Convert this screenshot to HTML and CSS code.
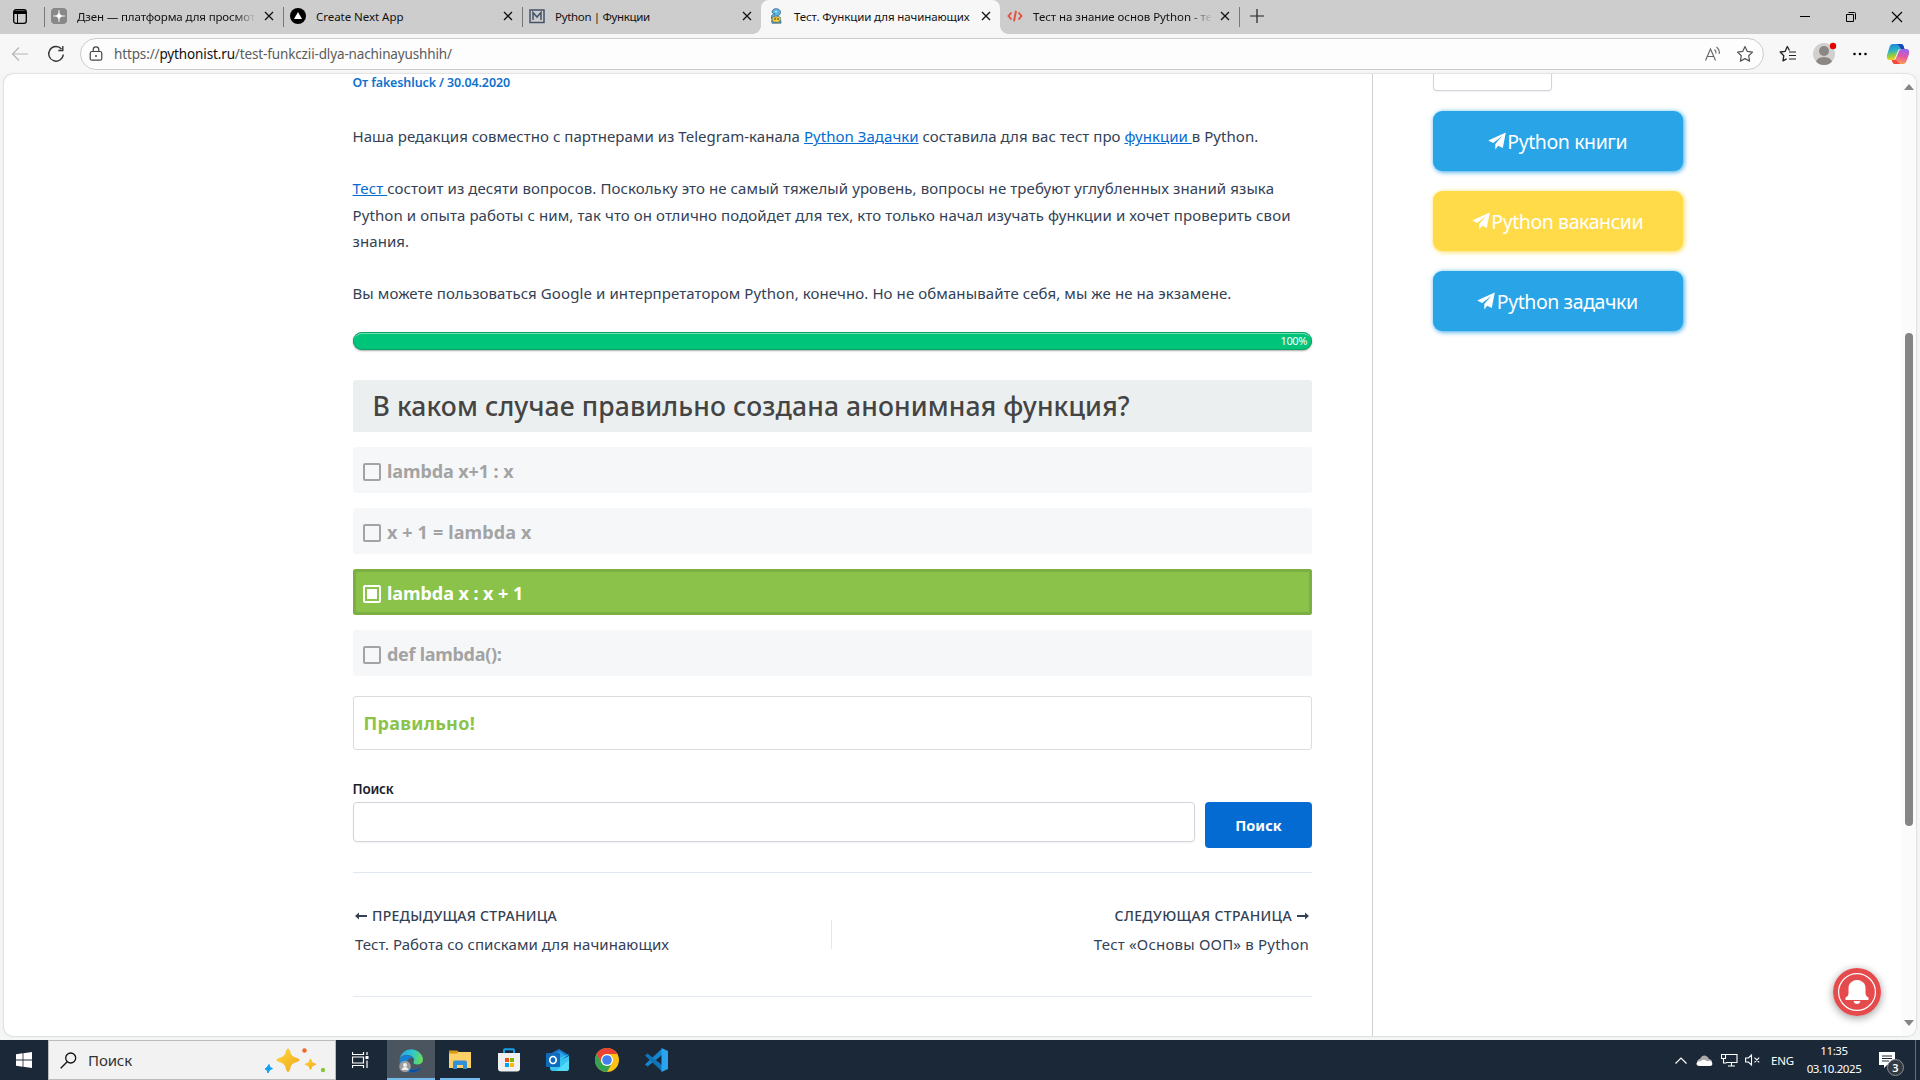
FILE: index.html
```html
<!DOCTYPE html>
<html lang="ru">
<head>
<meta charset="utf-8">
<title>Тест. Функции для начинающих</title>
<link rel="stylesheet" href="styles.css">
</head>
<body>
<svg class="defs" width="0" height="0">
  <symbol id="x" viewBox="0 0 10 10"><path d="M1 1l8 8M9 1l-8 8" fill="none" stroke="#111" stroke-width="1.3"/></symbol>
  <symbol id="plane" viewBox="0 0 18 18"><path fill="#fff" d="M17.800.5L.2 8.600l5 2.300L14.200 4 7.300 12v5.500l2.900-3.700 4.600 2.200z"/></symbol>
</svg>

<header class="tabbar">
  <div class="tab-actions">
    <svg width="14" height="15" viewBox="0 0 14 15"><rect x=".7" y=".7" width="12.600" height="13.600" rx="2.300" fill="none" stroke="#000" stroke-width="1.300"/><path d="M1 1.500h12V5H1z" fill="#000"/><path d="M4.500 4v10" stroke="#000"/></svg>
  </div>
  <div class="tab sep">
    <svg class="fav" width="16" height="16" viewBox="0 0 16 16"><rect width="16" height="16" rx="4" fill="#888"/><path d="M8 2C8.200 6.800 9.200 7.800 14 8 9.200 8.200 8.200 9.200 8 14 7.800 9.200 6.800 8.200 2 8 6.800 7.800 7.800 6.800 8 2z" fill="#fff" stroke="#fff" stroke-width=".5"/></svg>
    <span class="tab-title t1 fade">Дзен — платформа для просмот</span><svg class="close"><use href="#x"/></svg>
  </div>
  <div class="tab sep">
    <svg class="fav" width="16" height="16" viewBox="0 0 16 16"><circle cx="8" cy="8" r="8" fill="#000"/><path d="M8 4l4 7H4z" fill="#fff"/></svg>
    <span class="tab-title t2">Create Next App</span><svg class="close"><use href="#x"/></svg>
  </div>
  <div class="tab sep">
    <svg class="fav" width="16" height="16" viewBox="0 0 16 16"><path d="M1 2h14v12.500H1z" fill="none" stroke="#43536a" stroke-width="1.500"/><path d="M4 12V4.500L8 9l4-4.500V12" fill="none" stroke="#43536a" stroke-width="1.500"/></svg>
    <span class="tab-title t3">Python | Функции</span><svg class="close"><use href="#x"/></svg>
  </div>
  <div class="tab active">
    <svg class="fav" width="16" height="16" viewBox="0 0 16 16"><path d="M4 4.500C4 2 5.500.7 8 .7s4.500 1.200 4.500 3.500S11 8 8.500 8 5 8.500 5 11H3.500V8.500C3.500 7 5 6 7 6z" fill="#59b7ea" stroke="#2b5876" stroke-width=".7"/><path d="M4 9.500l2-1 2 .8 2-1 2.500 1.200-.5 5H4.500z" fill="#f4cf3b" stroke="#54686a" stroke-width=".7"/><path d="M3.500 12.500q5 4 9.500 0v2.800H4z" fill="#55a9d2" stroke="#3d5966" stroke-width=".6"/><circle cx="8" cy="3.500" r="1" fill="#b9e5ff"/><circle cx="7" cy="11" r=".7"/><circle cx="10" cy="11" r=".7"/></svg>
    <span class="tab-title t4">Тест. Функции для начинающих</span><svg class="close"><use href="#x"/></svg>
  </div>
  <div class="tab">
    <svg class="fav" width="16" height="16" viewBox="0 0 16 16"><path d="M4.500 4.500L1.500 8l3 3.500M11.500 4.500l3 3.500-3 3.500M9 2.800L7 13.200" fill="none" stroke="#e2503f" stroke-width="1.900"/></svg>
    <span class="tab-title t5 fade">Тест на знание основ Python - те</span><svg class="close"><use href="#x"/></svg>
  </div>
  <div class="new-tab sep"><svg width="16" height="16" viewBox="0 0 16 16"><path d="M8 1v14M1 8h14" stroke="#222" stroke-width="1.200"/></svg></div>
  <div class="win">
    <svg width="46" height="34" viewBox="0 0 46 34"><path d="M18 16.500h10" stroke="#000"/></svg>
    <svg width="46" height="34" viewBox="0 0 46 34"><path d="M18.500 14.500h7v7h-7zM20.500 12.500h6q1 0 1 1v6" fill="none" stroke="#000"/></svg>
    <svg width="46" height="34" viewBox="0 0 46 34"><path d="M18 12l10 10M28 12L18 22" stroke="#000" stroke-width="1.100"/></svg>
  </div>
</header>

<nav class="toolbar">
  <svg class="back" width="18" height="16" viewBox="0 0 18 16"><path d="M17 8H1.500M8 1.500L1.500 8 8 14.500" fill="none" stroke="#b5b5b5" stroke-width="1.200"/></svg>
  <svg class="reload" width="18" height="18" viewBox="0 0 18 18"><path d="M16.300 9.500A7.300 7.300 0 1 1 14.500 4M15.800 1v4.500h-4.500" fill="none" stroke="#333" stroke-width="1.400"/></svg>
  <div class="address">
    <svg class="lock" width="14" height="16" viewBox="0 0 14 16"><rect x="1.200" y="5.500" width="11.600" height="8.700" rx="1.800" fill="none" stroke="#444" stroke-width="1.200"/><path d="M4.200 5.500V3.700a2.800 2.800 0 0 1 5.600 0v1.800" fill="none" stroke="#444" stroke-width="1.200"/><circle cx="7" cy="10" r="1" fill="#444"/></svg>
    <span class="url">https://<b>pythonist.ru</b>/test-funkczii-dlya-nachinayushhih/</span>
    <svg class="aloud" width="17" height="16" viewBox="0 0 17 16"><path d="M1.500 14.500L6.500 3l5 11.500M3.300 10.500h6.400M10.500 3.500q2 1.800 1.500 4M12.500 1q3.500 3 2.700 7" fill="none" stroke="#666" stroke-width="1.100"/></svg>
    <svg width="18" height="18" viewBox="0 0 18 18"><path d="M9 1.500l2.300 4.900 5.200.7-3.800 3.700.9 5.300L9 13.600l-4.600 2.500.9-5.300L1.500 7.100l5.200-.7z" fill="none" stroke="#555" stroke-width="1.200" stroke-linejoin="round"/></svg>
  </div>
  <svg class="favs" width="18" height="18" viewBox="0 0 18 18"><path d="M10.500 5.500L8.300 1.500 6.200 6.300l-5 .7 3.600 3.700-.8 5.200 3.600-2" fill="none" stroke="#222" stroke-width="1.300" stroke-linejoin="round"/><path d="M10 7h7M10 10.500h7M10 14h7" stroke="#222" stroke-width="1.200"/></svg>
  <svg class="avatar" width="26" height="26" viewBox="0 0 26 26"><defs><clipPath id="av"><circle cx="12" cy="14" r="11"/></clipPath></defs><circle cx="12" cy="14" r="11" fill="#d2d0ce"/><g clip-path="url(#av)" fill="#8a8785"><circle cx="12" cy="11" r="5"/><ellipse cx="12" cy="22.500" rx="8" ry="5.500"/></g><circle cx="21" cy="6" r="3.200" fill="#e60000"/></svg>
  <svg class="dots" width="16" height="4" viewBox="0 0 16 4"><circle cx="2.500" cy="2" r="1.300"/><circle cx="8" cy="2" r="1.300"/><circle cx="13.500" cy="2" r="1.300"/></svg>
  <svg class="copilot" width="24" height="22" viewBox="0 0 24 22"><defs><linearGradient id="c1" x1="0" y1="0" x2=".2" y2="1"><stop offset="0" stop-color="#1b7fe0"/><stop offset=".45" stop-color="#2cb2c9"/><stop offset=".75" stop-color="#8fce3f"/><stop offset="1" stop-color="#f5cf1d"/></linearGradient><linearGradient id="c2" x1=".5" y1="0" x2=".3" y2="1"><stop offset="0" stop-color="#9a62ee"/><stop offset=".45" stop-color="#e357a5"/><stop offset="1" stop-color="#ffa34a"/></linearGradient></defs><path d="M10 1h5q2 0 2.500 2l1 3h-4q-2 0-2.600 2L9 15q-.6 2-2.500 2H4q-4 0-3-5L3.500 4Q4.500 1 7 1z" fill="url(#c1)"/><path d="M10 1h5q2 0 2.500 2l1 3h-3.500q-1.500-2.500-2-3.500T10 1z" fill="#1746b8"/><path d="M14 21H9q-2 0-2.500-2l-.8-2H7.500q2 0 2.600-2L13 8q.6-2 2.500-2H20q4 0 3 5l-2.500 7q-1 3-3.500 3z" fill="url(#c2)"/><path d="M14 21H9q-2 0-2.500-2l-.8-2H9.500q1 0 1.500 1z" fill="#f2463f"/></svg>
</nav>

<div class="frame">
  <main class="page">
    <article class="post">
      <div class="meta">От fakeshluck / 30.04.2020</div>
      <p class="intro">Наша редакция совместно с партнерами из Telegram-канала <a>Python Задачки</a> составила для вас тест про <a>функции </a>в Python.</p>
      <p><a>Тест </a>состоит из десяти вопросов. Поскольку это не самый тяжелый уровень, вопросы не требуют углубленных знаний языка<br>Python и опыта работы с ним, так что он отлично подойдет для тех, кто только начал изучать функции и хочет проверить свои<br>знания.</p>
      <p>Вы можете пользоваться Google и интерпретатором Python, конечно. Но не обманывайте себя, мы же не на экзамене.</p>
      <div class="progress">100%</div>
      <h2 class="question">В каком случае правильно создана анонимная функция?</h2>
      <div class="answer a1"><i class="box"></i><span>lambda x+1 : x</span></div>
      <div class="answer a2"><i class="box"></i><span>x + 1 = lambda x</span></div>
      <div class="answer a3 correct"><i class="box"></i><span>lambda x : x + 1</span></div>
      <div class="answer a4"><i class="box"></i><span>def lambda():</span></div>
      <div class="result">Правильно!</div>
      <div class="label">Поиск</div>
      <div class="search"><div class="field"></div><div class="submit">Поиск</div></div>
      <div class="post-nav">
        <div class="prev"><div class="dir"><svg width="13" height="12" viewBox="0 0 13 12"><path d="M0 6l4-3.500V5h8v2H4v2.500z" fill="#334155"/></svg><span>ПРЕДЫДУЩАЯ СТРАНИЦА</span></div><div class="dest">Тест. Работа со списками для начинающих</div></div>
        <div class="divider"></div>
        <div class="next"><div class="dir"><span>СЛЕДУЮЩАЯ СТРАНИЦА</span><svg width="13" height="12" viewBox="0 0 13 12"><path d="M13 6L9 2.500V5H1v2h8v2.500z" fill="#334155"/></svg></div><div class="dest">Тест «Основы ООП» в Python</div></div>
      </div>
    </article>
    <aside class="side">
      <div class="cut-field"></div>
      <div class="tg"><svg width="18" height="18"><use href="#plane"/></svg><span>Python книги</span></div>
      <div class="tg yellow"><svg width="18" height="18"><use href="#plane"/></svg><span>Python вакансии</span></div>
      <div class="tg"><svg width="18" height="18"><use href="#plane"/></svg><span>Python задачки</span></div>
    </aside>
    <div class="scroll">
      <svg width="10" height="6" viewBox="0 0 10 6"><path d="M5 0l5 6H0z" fill="#858585"/></svg>
      <div class="thumb"></div>
      <svg width="10" height="6" viewBox="0 0 10 6"><path d="M5 6l5-6H0z" fill="#858585"/></svg>
    </div>
    <div class="bell"><svg width="48" height="48" viewBox="0 0 48 48"><circle cx="24" cy="24" r="24" fill="#e54b4d"/><circle cx="24" cy="24" r="18.400" fill="none" stroke="#fff" stroke-width="1.200"/><path d="M24 12q3 0 4 1 4.500 2 4.500 7v5q0 3 3 4.500V32h-23v-2.500q3-1.500 3-4.500v-5q0-5 4.500-7 1-1 4-1z" fill="#fff"/><path d="M20.500 33h7q-.8 3-3.500 3t-3.500-3z" fill="#fff"/></svg></div>
  </main>
</div>

<footer class="taskbar">
  <div class="start"><svg width="16" height="16" viewBox="0 0 16 16" fill="#fff"><path d="M0 2.200L6.600 1.300v6.300H0zM7.400 1.200L16 0v7.600H7.400zM0 8.400h6.600v6.300L0 13.800zM7.400 8.400H16V16l-8.600-1.200z"/></svg></div>
  <div class="tb-search">
    <svg width="17" height="17" viewBox="0 0 17 17"><circle cx="10.700" cy="6" r="5" fill="none" stroke="#111" stroke-width="1.300"/><path d="M7.200 9.700L.7 16.200" stroke="#111" stroke-width="1.300"/></svg>
    <span>Поиск</span>
    <svg class="sparkle" width="62" height="26" viewBox="0 0 62 26"><defs><linearGradient id="g" x1="0" y1="0" x2="1" y2="1"><stop offset="0" stop-color="#ffd83a"/><stop offset="1" stop-color="#f2a61c"/></linearGradient></defs><path d="M24 1.500q1.500 0 3 5.500 1 2.200 3 3 5.500 1.500 5.500 3T30 16q-2 1-3 3-1.500 6-3 6t-3-6q-1-2-3-3-5.500-1.500-5.500-3t5.500-3q2-.8 3-3 1.500-5.500 3-5.500z" fill="url(#g)"/><path d="M46.500 11.500q.8 0 1.600 3l1 1.200q3.400.8 3.400 1.600t-3.400 1.600l-1 1.100q-.8 3-1.600 3t-1.600-3l-1-1.100q-3.400-.8-3.400-1.600t3.400-1.600l1-1.200q.8-3 1.600-3z" fill="url(#g)"/><path d="M5 17.500l1 3 2.500 1-2.800 1.300L4 26l-1-3-2-1 2-1.500z" fill="#0da2f0" stroke="#0da2f0" stroke-linejoin="round"/><circle cx="40.500" cy="3.500" r="2.200" fill="#f26522"/><circle cx="59" cy="23" r="2.200" fill="#8bc53f"/></svg>
  </div>
  <div class="tb"><svg width="17" height="16" viewBox="0 0 17 16"><path d="M.5 0v2.500h11V0M.5 16v-2.500h11V16M.5 5h11v6H.5zM15 0v3M15 8.500V16" fill="none" stroke="#fff" stroke-width="1.200"/><path d="M13.500 4h3v3h-3z" fill="#fff"/></svg></div>
  <div class="tb on"><svg width="26" height="26" viewBox="0 0 26 26"><defs><linearGradient id="e" x1="0" y1=".3" x2="1" y2=".5"><stop offset="0" stop-color="#24a6e5"/><stop offset=".5" stop-color="#30c6cf"/><stop offset="1" stop-color="#66dc58"/></linearGradient></defs><path d="M1.500 12A12 12 0 0 1 25 11.500q.5 5.500-5.500 6-4.500 0-4-2.500 1.500-2 0-4Q13.500 8 9 8q-5 0-7.500 4z" fill="url(#e)"/><path d="M1.200 14Q3 8.200 9 8.200q4.500 0 6.500 2.800-4.500-1-6 3-1 6 5 8.500 5 1.500 9-2.500-4 6-11 5.500Q2.500 24.500 1.200 14z" fill="#1580d4"/><path d="M9.500 13q-2.500 5.500 2 8.500 5 3.500 12.500-2-4 6.500-11 6-8-4-3.500-12.500z" fill="#0c4fa0"/><circle cx="7" cy="19.500" r="5.800" fill="#9c9c9c"/><circle cx="7" cy="18" r="2" fill="#eee"/><path d="M3.500 23q1-3 3.500-3t3.500 3z" fill="#eee"/></svg></div>
  <div class="tb open"><svg width="22" height="20" viewBox="0 0 22 20"><path d="M0 2h22v16H0z" fill="#fdd166"/><path d="M0 .5h8l1.500 1-1.500 2H0z" fill="#d99a13"/><path d="M4 19v-6.500q0-2 2-2h10q2 0 2 2V19h-4v-4H8v4z" fill="#338fd8"/></svg></div>
  <div class="tb"><svg width="24" height="24" viewBox="0 0 24 24"><path d="M7 6V2.200q0-1 1-1h8q1 0 1 1V6" fill="none" stroke="#19a0ea" stroke-width="2"/><path d="M1 5h22v15.500q0 3-3 3H4q-3 0-3-3z" fill="#f0f0f0"/><path d="M8 10h4v4H8z" fill="#f25022"/><path d="M13 10h4v4h-4z" fill="#7fba00"/><path d="M8 15h4v4H8z" fill="#00a4ef"/><path d="M13 15h4v4h-4z" fill="#ffb900"/></svg></div>
  <div class="tb"><svg width="24" height="24" viewBox="0 0 24 24"><path d="M4 6l9-5 10 6v7H4z" fill="#1976c5"/><path d="M8 6.500l6-3 7 5-6 5H8z" fill="#2ba4ea"/><path d="M4 13l19-6.500V20q0 3-3 3H7q-3 0-3-3z" fill="#37c5f1"/><path d="M4 17l19-9V6.500L15 12H4z" fill="#174f98"/><path d="M10 23L23 12v8q0 3-3 3z" fill="#52dcf8"/><rect y="5" width="14" height="14" rx="1" fill="#0f6cbd"/><ellipse cx="7" cy="12" rx="3.200" ry="3.500" fill="none" stroke="#fff" stroke-width="1.700"/></svg></div>
  <div class="tb"><svg width="24" height="24" viewBox="0 0 24 24"><circle cx="12" cy="12" r="12" fill="#fbc116"/><path d="M12 24A12 12 0 0 1 1.600 6L6.800 15 12 18l4.500-2z" fill="#34a34f"/><path d="M1.600 6A12 12 0 0 1 22.400 6H12a6 6 0 0 0-5.200 9z" fill="#ea4335"/><circle cx="12" cy="12" r="6" fill="#fff"/><circle cx="12" cy="12" r="4.800" fill="#4080ee"/></svg></div>
  <div class="tb"><svg width="24" height="24" viewBox="0 0 24 24"><path d="M1.500 16.500L17.500 1.500V7L3.500 18z" fill="#1487d0" stroke="#1487d0" stroke-linejoin="round"/><path d="M1.500 7.500L17.500 22.500V17L3.500 6z" fill="#1074b8" stroke="#1074b8" stroke-linejoin="round"/><path d="M17.500 0L24 3v18l-6.500 3z" fill="#29a3f2"/></svg></div>
  <div class="tray">
    <svg width="12" height="7" viewBox="0 0 12 7"><path d="M.5 6.500L6 1l5.500 5.500" fill="none" stroke="#fff" stroke-width="1.200"/></svg>
    <svg width="17" height="11" viewBox="0 0 17 11"><path d="M2 9q-2-2 0-4 .500-1 2-1.200Q6 0 9 .5q3 .5 4 3.500 3 .5 3 3z" fill="#aaa"/><path d="M3 11q-3-.5-2.500-2.500Q1 6 4.500 6.200 7 3.500 10 5.500l1.200.8q3-1.300 4.500.7Q17.500 10 14.500 11z" fill="#fff"/></svg>
    <svg width="17" height="14" viewBox="0 0 17 14"><path d="M5 1.500h11v8H5M10.500 9.500v3M7 13h7M.5 1.500h4v4h-4zM2.500 5.500v4.500h3" fill="none" stroke="#fff" stroke-width="1.100"/></svg>
    <svg width="15" height="12" viewBox="0 0 15 12"><path d="M.6 4h2.800L6.500 1v10L3.400 8H.6zM9.500 3.700l4.700 4.700M14.200 3.700L9.500 8.400" fill="none" stroke="#fff" stroke-width="1.100"/></svg>
    <span class="lang">ENG</span>
    <div class="clock"><span class="time">11:35</span><span class="date">03.10.2025</span></div>
    <div class="notif"><svg width="16" height="16" viewBox="0 0 16 16"><path d="M0 0h16v13H8l-3 3v-3H0z" fill="#fff"/><path d="M3 4h10M3 6.500h10M3 9h7" stroke="#1b2838"/></svg><span class="count">3</span></div>
    <div class="desk"></div>
  </div>
</footer>
</body>
</html>
```
FILE: styles.css
```css
*{box-sizing:border-box}
body{margin:0;width:1920px;height:1080px;overflow:hidden;font-family:"Noto Sans",sans-serif;background:#f7f7f7;display:flex;flex-direction:column;white-space:nowrap}
svg{display:block;flex:none}
.defs{position:absolute}

/* Browser tabs */
.tabbar{height:34px;background:#cdcdcd;display:flex;flex:none}
.tab-actions{width:44px;display:flex;align-items:center;padding-left:13px;padding-bottom:2px}
.tab{width:239px;display:flex;align-items:center;padding:0 10px 2px 7px;position:relative}
.sep::before{content:"";position:absolute;left:0;top:7px;width:1px;height:20px;background:#777}
.tab-title{font-size:11.5px;color:#111;margin-left:10px;width:180px}
.tab .close{width:10px;height:10px;margin-left:7.5px;margin-right:-.5px}
.t1{letter-spacing:-.124px}.t2{letter-spacing:-.04px}.t3{letter-spacing:-.33px}.t4{letter-spacing:-.11px}.t5{letter-spacing:-.05px}
.fade{-webkit-mask-image:linear-gradient(90deg,#000 88%,transparent);mask-image:linear-gradient(90deg,#000 88%,transparent)}
.tab.active{background:#f7f7f7;border-radius:8px 8px 0 0}
.tab.active::before,.tab.active::after{content:"";position:absolute;bottom:0;width:8px;height:8px}
.tab.active::before{left:-8px;background:radial-gradient(circle at 0 0,#cdcdcd 7.5px,#f7f7f7 8px)}
.tab.active::after{right:-8px;background:radial-gradient(circle at 100% 0,#cdcdcd 7.5px,#f7f7f7 8px)}
.new-tab{position:relative;width:36px;display:flex;align-items:center;padding:0 0 2px 10px}
.win{margin-left:auto;display:flex}

/* Toolbar */
.toolbar{height:40px;flex:none;display:flex;align-items:center}
.back{margin-left:11px}
.reload{margin-left:18px}
.address{width:1684px;height:32px;margin-left:15px;border:1px solid #cbcbcb;border-radius:16px;background:#fdfdfd;display:flex;align-items:center;padding:0 9px 0 8px}
.url{font-size:13.5px;letter-spacing:-.135px;color:#5b5b5b;margin-left:11px;margin-right:auto}
.url b{font-weight:400;color:#111}
.aloud{margin-right:15px}
.favs{margin-left:15px}
.avatar{margin:-2px 0 0 15px}
.dots{margin-left:14px}
.copilot{margin-left:18px}

/* Page */
.frame{height:966px;flex:none;padding:0 4px 4px;background:#f4f6f6}
.page{height:962px;background:#fff;border-radius:9px;overflow:hidden;box-shadow:0 0 2px #aaa;display:flex;position:relative}
.post{width:1369px;padding:0 60px 0 349px;border-right:1px solid #cfcfd6;color:#334155;flex:none}
.meta{font-size:12.5px;font-weight:600;letter-spacing:-.115px;line-height:17px;color:#1072cf;margin:0 0 32.4px -.5px}
.post p{margin:0 0 25.6px -.5px;font-size:15px;line-height:26.4px;letter-spacing:.094px}
.post .intro{letter-spacing:.033px}
.post a{color:#046bd2;text-decoration:underline}
.progress{height:18px;margin-top:-.4px;border-radius:9px;background:#00c479;color:#fff;font-size:11px;letter-spacing:-.4px;line-height:18px;text-align:right;padding-right:5px;box-shadow:inset 0 0 0 1px #08a365,inset 0 2px 0 #6fe0b0,0 1px 2px #aaa}
.question{margin:30px 0 0;height:52px;line-height:53px;padding-left:19.5px;background:#ebeff0;border-radius:3px 3px 0 0;font-size:26.5px;font-weight:500;letter-spacing:.13px;color:#444}
.answer{height:46px;margin-top:15px;background:#f6f7f9;border-radius:3px;padding:3px 10px 0;display:flex;align-items:center;font-size:18px;font-weight:700;color:#a3a3a3}
.box{width:18px;height:18px;border:2px solid #a3a3a3;border-radius:2px;margin:1px 6px 0 0}
.a1{letter-spacing:-.09px}.a2{letter-spacing:.14px}.a3{letter-spacing:-.06px}.a4{letter-spacing:-.28px}
.answer.correct{background:#8bc34a;box-shadow:inset 0 0 0 3px #7cae42;color:#fff}
.correct .box{border-color:#fff;background:#fff;background-clip:content-box;padding:2px}
.result{margin-top:20px;height:54px;line-height:52px;border:1px solid #dcdcdc;border-radius:3px;padding-left:9.5px;font-size:18px;font-weight:700;letter-spacing:.284px;color:#8bc34a}
.label{margin:29px 0 3px -.5px;font-size:13.5px;line-height:20px;font-weight:600;letter-spacing:-.2px;color:#1a202c}
.search{display:flex;gap:10px;height:70px;align-items:flex-start;padding-bottom:24px}
.field{flex:1;height:40px;border:1px solid #d1d5db;border-radius:4px;box-shadow:0 1px 2px rgba(0,0,0,.06)}
.submit{width:107px;height:46px;line-height:46px;border-radius:4px;background:#046bd2;color:#fff;text-align:center;font-size:14.5px;font-weight:700}
.post-nav{border-top:1px solid #e2e8f0;border-bottom:1px solid #e2e8f0;height:125px;padding:31px 3px 0 2px;display:grid;grid-template-columns:476px 1px 1fr}
.dir{display:flex;align-items:center;gap:4px;font-size:14px;font-weight:500;line-height:24px}
.prev .dir{letter-spacing:.28px}
.next .dir{letter-spacing:.35px;justify-content:flex-end}
.dest{margin-top:2px;font-size:15px;line-height:28px;letter-spacing:.046px}
.next .dest{letter-spacing:.2px;text-align:right}
.divider{margin-top:16px;height:29px;background:#e2e8f0}

/* Sidebar */
.side{width:310px;padding-left:60px;flex:none}
.cut-field{width:119px;height:17px;margin-bottom:20px;border:1px solid #d1d5db;border-top:0;border-radius:0 0 4px 4px;box-shadow:0 1px 2px rgba(0,0,0,.06)}
.tg{height:60px;margin-bottom:20px;border-radius:9px;background:#28a4e7;box-shadow:1px 1px 5px #28a4e7;color:#fff;font-size:19.5px;letter-spacing:-.42px;display:flex;align-items:center;justify-content:center;gap:1.5px;padding:1px 1px 0 0}
.tg svg{margin-top:-2px}
.tg.yellow{background:#ffdb49;box-shadow:1px 1px 5px #ffdb49}
.scroll{margin-left:auto;width:15px;background:#fbfbfb;display:flex;flex-direction:column;align-items:center;padding:10px 0}
.thumb{width:8px;height:493px;margin:243px 0 auto;border-radius:4px;background:#858585}
.bell{position:absolute;left:1829px;top:894px;width:48px;height:48px;border-radius:50%;box-shadow:0 2px 8px rgba(0,0,0,.4)}

/* Taskbar */
.taskbar{height:40px;flex:none;background:#1b2838;color:#fff;display:flex}
.start{width:48px;display:flex;align-items:center;justify-content:center}
.tb-search{width:288px;background:#f2f2f2;border:1px solid #bbb;display:flex;align-items:center;padding:0 9px 0 11px;color:#333;font-size:15px;letter-spacing:-.119px}
.tb-search span{margin-left:11px;margin-right:auto}
.tb{width:49px;display:flex;align-items:center;justify-content:center}
.tb.on{width:48px;margin-left:2px;background:#4a5560;border-bottom:2px solid #76b9ed;padding-top:2px}
.tb.open{background:linear-gradient(#76b9ed,#76b9ed) 50% 100%/40px 2px no-repeat}
.tray{margin-left:auto;display:flex;align-items:center}
.tray>svg{margin-right:8px}
.tray>svg:first-child{margin-right:9px}
.tray>svg:nth-child(3){margin-right:7px}
.lang{font-size:11.5px;letter-spacing:-.2px;margin:0 13px 0 3px}
.clock{width:54px;display:flex;flex-direction:column;align-items:center;font-size:11.5px;line-height:18px;letter-spacing:-.42px}
.notif{position:relative;margin:0 20px 0 18px}
.count{position:absolute;left:8px;top:7px;width:17px;height:17px;border-radius:50%;background:#333a42;border:1px solid #8a8f95;font-size:11px;font-weight:600;line-height:15px;text-align:center}
.desk{width:5px;height:40px;border-left:1px solid #66707a}
```
